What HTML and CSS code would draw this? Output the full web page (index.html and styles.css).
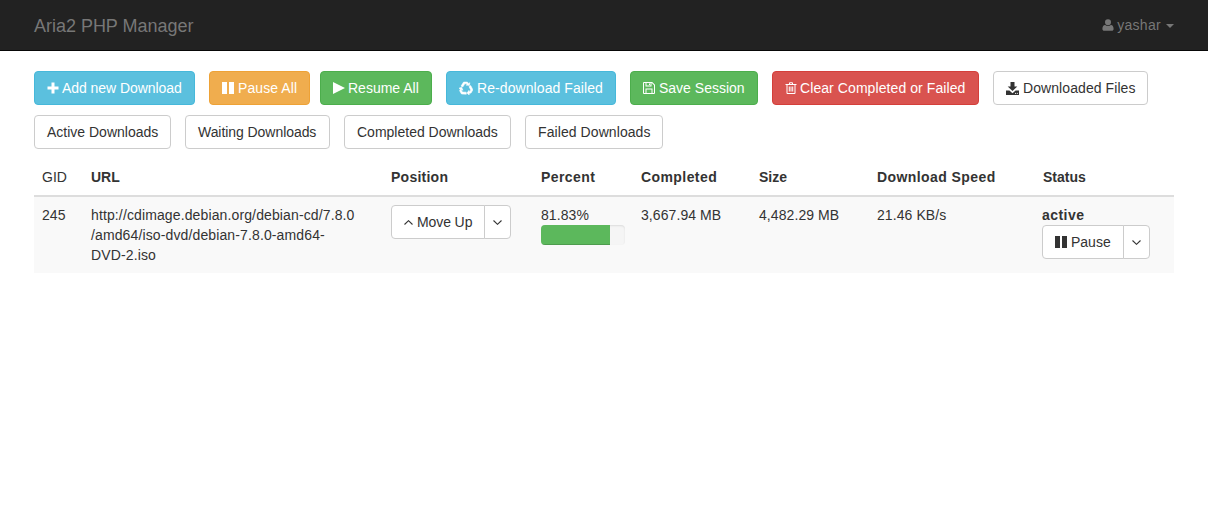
FILE: index.html
```html
<!DOCTYPE html>
<html lang="en">
<head>
<meta charset="utf-8">
<title>Aria2 PHP Manager</title>
<link rel="stylesheet" href="styles.css">
</head>
<body>
<nav class="navbar">
  <a class="brand" href="#">Aria2 PHP Manager</a>
  <a class="user" href="#">
    <svg class="icon icon-user" viewBox="0 0 12 12"><path d="M6 0.200a3 3 0 0 1 3 3.100a3 3 0 0 1-6 0a3 3 0 0 1 3-3.100zM3.100 6c.8.7 1.800 1 2.900 1s2.100-.3 2.900-1C10.800 6 11.600 7.800 11.600 10c0 1.200-.8 1.800-1.800 1.800H2.200C1.200 11.800.4 11.200.4 10C.4 7.800 1.200 6 3.100 6z"/></svg>
    <span class="user-name">yashar</span><span class="caret"></span>
  </a>
</nav>
<main class="page">
  <div class="toolbar">
    <a class="btn info b-add narrow" href="#"><svg class="icon" viewBox="0 0 12 12"><path d="M4.500 0.500h3v4h4v3h-4v4h-3v-4h-4v-3h4z"/></svg>Add new Download</a>
    <a class="btn warning b-pause roomy" href="#"><svg class="icon wide-gap" viewBox="0 0 12 12"><path d="M0 0h5v12H0zM7 0h5v12H7z"/></svg>Pause All</a>
    <a class="btn success b-resume" href="#"><svg class="icon" viewBox="0 0 12 12"><path d="M0 0l12 6L0 12z"/></svg>Resume All</a>
    <a class="btn info b-redo roomy" href="#"><svg class="icon icon-recycle" viewBox="-7 -7 14 14"><path id="recycle-arrow" d="M-5 -1.900L-2.400 -6H1.400L2.400 -4.500L3.900 -5.300L3.400 -2.500L0 -2.900L1.300 -3.600L.7 -4.200H-1.200L-3.200 -1z"/><use href="#recycle-arrow" transform="rotate(120 0 0.600)"/><use href="#recycle-arrow" transform="rotate(240 0 0.600)"/></svg>Re-download Failed</a>
    <a class="btn success b-save" href="#"><svg class="icon wide-gap" viewBox="0 0 12 12"><path fill-rule="evenodd" d="M0 1a1 1 0 0 1 1-1h8.200L12 2.800V11a1 1 0 0 1-1 1H1a1 1 0 0 1-1-1zM1 1v10h1.500V6.500h7V11H11V3.200L8.800 1H8.500v3.500h-6V1zM3.500 1v2.500h4V1zM6 1.500h1v1.500H6zM3.500 7.500V11h5V7.500z"/></svg>Save Session</a>
    <a class="btn danger b-clear roomy" href="#"><svg class="icon" viewBox="0 0 12 12"><path fill-rule="evenodd" d="M4 1.200 4.500.3h3L8 1.200V2h3.500v1h-1v8a1 1 0 0 1-1 1h-7a1 1 0 0 1-1-1V3h-1V2H4zM5 1.200V2h2V1.200zM2.500 3v8h7V3zM3.800 4.500h1v5h-1zM5.500 4.500h1v5h-1zM7.200 4.500h1v5h-1z"/></svg>Clear Completed or Failed</a>
    <a class="btn default b-files roomy" href="#"><svg class="icon icon-dl" viewBox="0 0 13 13"><path d="M4.500 0h4v4.500h2.800L6.500 9 1.700 4.500h2.800zM0 8.500h3.400l3.100 2.700 3.100-2.700H13V13H0zM9.500 10.700a.6.6 0 1 0 0 1.200a.6.6 0 0 0 0-1.200zM11.300 10.700a.6.6 0 1 0 0 1.200a.6.6 0 0 0 0-1.200z" fill-rule="evenodd"/></svg>Downloaded Files</a>
  </div>
  <div class="toolbar second">
    <a class="btn default b-active" href="#">Active Downloads</a>
    <a class="btn default b-waiting narrow" href="#">Waiting Downloads</a>
    <a class="btn default b-completed" href="#">Completed Downloads</a>
    <a class="btn default b-failed roomy" href="#">Failed Downloads</a>
  </div>
  <table class="downloads">
    <colgroup>
      <col class="c-gid"><col class="c-url"><col class="c-pos"><col class="c-pct"><col class="c-done"><col class="c-size"><col class="c-speed"><col class="c-status">
    </colgroup>
    <thead>
      <tr>
        <th class="plain">GID</th><th>URL</th><th class="mid">Position</th><th class="wide">Percent</th><th class="wide">Completed</th><th>Size</th><th class="wide">Download Speed</th><th>Status</th>
      </tr>
    </thead>
    <tbody>
      <tr>
        <td>245</td>
        <td class="url">http://cdimage.debian.org/debian-cd/7.8.0<br>/amd64/iso-dvd/debian-7.8.0-amd64-<br>DVD-2.iso</td>
        <td>
          <div class="split">
            <a class="btn default main move" href="#"><svg class="angle up" viewBox="0 0 9 5"><path d="M.5 4.500 4.500.7l4 3.800"/></svg>Move Up</a>
            <a class="btn default drop" href="#"><svg class="angle" viewBox="0 0 9 5"><path d="M.5.500l4 3.800 4-3.800"/></svg></a>
          </div>
        </td>
        <td>
          81.83%
          <div class="progress"><div class="bar" style="width:81.83%"></div></div>
        </td>
        <td>3,667.94 MB</td>
        <td>4,482.29 MB</td>
        <td>21.46 KB/s</td>
        <td class="status">
          <strong>active</strong>
          <div class="split">
            <a class="btn default main pause" href="#"><svg class="icon wide-gap" viewBox="0 0 12 12"><path d="M0 0h5v12H0zM7 0h5v12H7z"/></svg>Pause</a>
            <a class="btn default drop" href="#"><svg class="angle" viewBox="0 0 9 5"><path d="M.5.500l4 3.800 4-3.800"/></svg></a>
          </div>
        </td>
      </tr>
    </tbody>
  </table>
</main>
</body>
</html>
```
FILE: styles.css
```css
* { box-sizing: border-box; }
html, body { margin: 0; padding: 0; }
body {
  font-family: "Liberation Sans", Arial, sans-serif;
  font-size: 14px;
  line-height: 20px;
  color: #333;
  background: #fff;
}
a { text-decoration: none; }

.navbar {
  display: flex;
  justify-content: space-between;
  align-items: center;
  height: 51px;
  padding: 0 34px;
  background: #222;
  border-bottom: 1px solid #080808;
}
.brand { font-size: 18px; color: #777; padding-top: 2px; letter-spacing: -.02px; }
.user { color: #777; display: flex; align-items: center; }
.user-name { letter-spacing: .3px; }
.icon-user { margin-right: 3px; }
.caret {
  width: 0;
  height: 0;
  margin-left: 5px;
  margin-top: 1px;
  border-top: 4px solid #777;
  border-left: 4px solid transparent;
  border-right: 4px solid transparent;
}

.page { padding: 20px 34px 0; }
.toolbar { display: flex; gap: 14px; }
.second { margin-top: 10px; }

.btn {
  display: inline-flex;
  flex: none;
  align-items: center;
  height: 34px;
  padding: 6px 12px;
  border: 1px solid transparent;
  border-radius: 4px;
  white-space: nowrap;
}
.info { background: #5bc0de; border-color: #46b8da; color: #fff; }
.warning { background: #f0ad4e; border-color: #eea236; color: #fff; }
.success { background: #5cb85c; border-color: #4cae4c; color: #fff; }
.danger { background: #d9534f; border-color: #d43f3a; color: #fff; }
.default { background: #fff; border-color: #ccc; color: #333; }
.narrow { letter-spacing: -.06px; }
.roomy { letter-spacing: .08px; }

.b-add { width: 161px; }
.b-pause { width: 101px; margin-right: -4px; }
.b-resume { width: 112px; }
.b-redo { width: 170px; }
.b-save { width: 128px; }
.b-clear { width: 207px; }
.b-files { width: 155px; }
.b-active { width: 137px; }
.b-waiting { width: 145px; }
.b-completed { width: 167px; }
.b-failed { width: 138px; }

.icon {
  flex: none;
  width: 12px;
  height: 12px;
  margin-right: 3px;
  fill: currentColor;
}
.wide-gap { margin-right: 4px; }
.icon-dl { width: 13px; height: 13px; margin-right: 4px; }
.icon-recycle {
  width: 14px;
  height: 14px;
  margin-right: 4px;
  stroke: currentColor;
  stroke-width: .5;
}

.downloads {
  width: 1140px;
  margin-top: 10px;
  table-layout: fixed;
  border-collapse: collapse;
  border-spacing: 0;
}
.c-gid { width: 49px; }
.c-url { width: 300px; }
.c-pos { width: 150px; }
.c-pct { width: 100px; }
.c-done { width: 118px; }
.c-size { width: 118px; }
.c-speed { width: 166px; }
.c-status { width: 139px; }
.downloads th {
  padding: 8px;
  text-align: left;
  font-weight: bold;
  border-bottom: 2px solid #ddd;
}
.downloads th.plain { font-weight: normal; }
.downloads th.mid { letter-spacing: .25px; }
.downloads th.wide { letter-spacing: .42px; }
.downloads td {
  padding: 8px;
  vertical-align: top;
  background: #f9f9f9;
  letter-spacing: .08px;
}
.downloads td.url { letter-spacing: .125px; }
.downloads td.status { padding-left: 7px; }
.status strong { letter-spacing: .45px; }

.split { display: flex; letter-spacing: 0; }
.split .move { width: 94px; letter-spacing: -.1px; }
.split .pause { width: 82px; }
.split .main { border-radius: 4px 0 0 4px; }
.split .drop {
  margin-left: -1px;
  width: 27px;
  padding: 0;
  justify-content: center;
  border-radius: 0 4px 4px 0;
}
.angle {
  flex: none;
  width: 9px;
  height: 5px;
  fill: none;
  stroke: currentColor;
  stroke-width: 1.1;
}
.angle.up { margin-right: 4px; }

.progress {
  width: 84px;
  height: 20px;
  overflow: hidden;
  background: #f5f5f5;
  border-radius: 4px;
  box-shadow: inset 0 1px 2px rgba(0,0,0,.1);
}
.bar {
  height: 100%;
  background: #5cb85c;
  box-shadow: inset 0 -1px 0 rgba(0,0,0,.15);
}
```
